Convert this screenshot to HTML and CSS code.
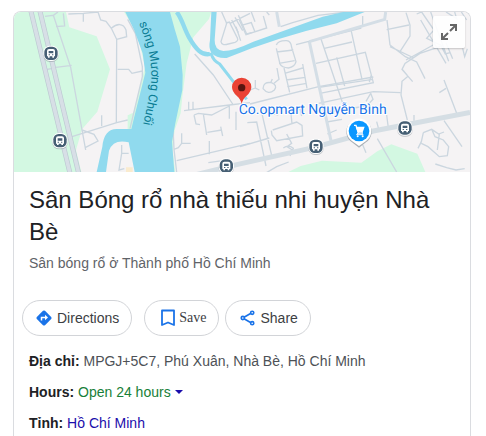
FILE: index.html
```html
<!DOCTYPE html>
<html lang="vi">
<head>
<meta charset="utf-8">
<meta name="viewport" content="width=device-width, initial-scale=1">
<title>Sân Bóng rổ nhà thiếu nhi huyện Nhà Bè</title>
<link rel="stylesheet" href="styles.css">
</head>
<body>
<main class="card">
  <div class="map">
    <svg class="map-art" viewBox="42 36 1368 480" preserveAspectRatio="xMidYMid slice" role="img" aria-label="Map">
      <defs>
        <path id="river-label" d="M417 69C436 118 451 160 454 212C456 268 440 318 424 400"/>
        <g id="bus">
          <rect x="-23" y="-20" width="46" height="46" rx="20" fill="#8b949c" opacity=".5"/>
          <rect x="-23" y="-23" width="46" height="46" rx="20" fill="#fff"/>
          <rect x="-20" y="-20" width="40" height="40" rx="16" fill="#465f74"/>
          <path d="M-12 -7q0 -6 6 -6h12q6 0 6 6v16h-3v4h-5v-4h-8v4h-5v-4h-3z" fill="#fff"/>
          <path d="M-7 -7h14v7h-14zM-7 3h4v3h-4zM3 3h4v3h-4z" fill="#465f74"/>
        </g>
      </defs>
      <rect x="42" y="36" width="1368" height="480" fill="#f5f3f4"/>
      <g fill="#d3f8e2">
        <path d="M42 36H198L208 82L290 109L330 208L292 335L246 388L228 450L244 516H42Z"/>
        <path d="M508 36H634L627 57L580 112L560 190L547 290L542 340L524 390L518 450L526 516H500Z"/>
        <path d="M383 346L400 338L435 200L412 100L372 36H400L450 200L410 392H383Z"/>
        <path d="M865 516L902 498L966 482L1084 488L1132 454L1174 433L1252 461L1276 516Z"/>
      </g>
      <path d="M378 502h20v14h-20z" fill="#faebce"/>
      <g fill="none" stroke="#cbd6df" stroke-width="4">
        <path d="M135 49L160 46L212 202L257 450M160 46L174 36M168 80L194 78L190 40M135 210L168 202L215 196M216 410L350 368L383 360M246 390L282 403L294 423L257 442"/>
        <path d="M205 42L250 40L294 36M250 40V65M294 36L302 60L318 64L334 85L350 118L349 368M334 85C350 70 370 68 378 90L380 110L350 118M353 208H386L396 220L427 213M383 58L406 100L427 200V230L390 386M305 346V378M365 435V460H386M365 460L357 510L373 506"/>
        <path d="M584 162L640 225L698 312M552 332L688 315L750 308M566 305V330M579 305V330M582 345L595 340L635 345L688 318M688 315V356M582 345L588 372L600 374M610 342L620 405M622 397L665 390M662 380L668 408M519 380L522 448L535 443L545 430L572 430M545 430V400M522 448L530 516M530 482L750 430M628 423V463"/>
        <path d="M665 36L680 70L663 125Q665 138 685 132L705 127Q718 122 710 110L690 70L750 40M695 60L715 98M705 52L728 92M715 46L740 102L755 98M677 69L690 66"/>
        <path d="M708 80L722 122M718 60L738 104L800 84L790 48M724 76L754 68L765 96M754 36L765 65M808 45L800 36M842 80L878 68L954 46L1040 36M1088 48V76"/>
        <path d="M829 135Q834 121 860 122Q873 123 875 142L888 185Q885 200 865 204Q845 202 840 192L829 145M830 156L880 150M837 190L884 182M852 204L869 277M854 220L908 204M858 240L916 232M862 260L920 250M908 192L921 265M831 204L837 238L822 250"/>
        <path d="M789 266Q790 244 814 248Q834 255 823 270Q805 286 789 266M766 240V264L778 270M750 270L766 264M750 312L956 260L1120 231M812 248L817 237"/>
        <path d="M888 134L1084 84M963 117L1031 318M973 145L1056 126M948 190L1096 157L1120 248L960 280M957 262L1118 238M1054 94L1086 238M1010 172L1034 258M1114 225L1108 246"/>
        <path d="M956 310L1120 275L1202 278M1112 280L1119 298L1100 318L980 336M1112 280L1098 304"/>
        <path d="M1161 60L1170 135L1216 170L1250 186L1275 236M1160 89L1227 75M1218 38L1230 75V108L1198 158M1250 42L1265 36L1302 90L1280 115L1326 138L1260 160L1215 190L1206 208L1238 245M1262 60L1338 190M1292 36L1346 184M1305 132L1218 180M1225 228L1206 244L1203 285L1222 360M1207 208L1222 226M1170 140L1242 174M1320 132L1336 162L1350 158M1338 128L1358 176M1388 145L1394 170L1402 146M1338 36L1370 56L1364 36M1384 36L1400 60"/>
        <path d="M1332 240L1370 340M1318 278L1338 265M1242 345V362M1332 362L1386 440M1270 398L1264 425L1254 445M1270 398L1295 388L1316 402L1332 396M1295 388L1305 410L1330 420L1346 440L1342 467L1318 470L1284 440L1264 430M1318 402L1312 450M1306 492L1340 503L1368 510L1394 506"/>
        <path d="M742 368L770 366L798 498M784 333L817 475M708 390V335M720 440L808 414M818 390L890 366L906 376L908 408L830 422L816 405L814 392M876 372L872 330M860 402L875 430L861 440L877 450M815 340L835 345M982 402L1010 390M980 366L1026 358M1130 365L1138 395M1160 345L1165 384M1132 416L1190 516M1088 434L1098 458M796 520L830 500L866 486M625 488L668 482M900 325L905 348M850 444Q865 432 880 445L870 468"/>
      </g>
      <g fill="none" stroke="#bdc9d2">
        <path d="M93 34L210 520M120 34L236 520" stroke-width="15"/>
        <path d="M93 34L210 520M120 34L236 520" stroke="#d7dfe6" stroke-width="11"/>
        <path d="M588 524L710 494L940 443L1120 393L1410 337" stroke="#d5dee4" stroke-width="15"/>
        <path d="M928 125L993 422M928 125L1154 58L1157 36M830 36L838 80" stroke="#d4dee6" stroke-width="9"/>
      </g>
      <g fill="#90daee">
        <path d="M376 36H510L524 87L540 140L548 225L547 270L526 370L516 425L523 516H404L386 427Q340 416 327 452L318 516H290L307 440Q312 386 352 387H394L402 354L436 218L428 160L402 89Z"/>
        <path d="M634 36H650L644 120Q643 150 670 153Q700 153 760 125L968 50L1030 36H1094L1010 70Q830 112 680 174Q650 176 634 158Q625 145 630 120Z"/>
      </g>
      <path d="M530 36C546 55 552 86 567 112C588 148 605 167 630 162" fill="none" stroke="#90daee" stroke-width="13"/>
      <path d="M632 158C640 180 645 184 659 192L700 245L740 298" fill="none" stroke="#90daee" stroke-width="9"/>
      <text class="river-text"><textPath href="#river-label">sông Mương Chuối</textPath></text>
      <use href="#bus" x="153" y="160"/>
      <use href="#bus" x="180" y="422"/>
      <use href="#bus" x="679" y="498"/>
      <use href="#bus" x="948" y="439"/>
      <use href="#bus" x="1215" y="384"/>
      <text class="place-text" x="716" y="341">Co.opmart Nguyễn Bình</text>
      <path d="M725 312Q722 297 710 287Q696 275 696 261A29 28 0 0 1 754 261Q754 275 740 287Q728 297 725 312Z" fill="#ea4335"/>
      <circle cx="725" cy="263" r="11" fill="#591510"/>
      <path d="M1077 443L1056 427A38 38 0 1 1 1098 427Z" fill="#8b949c" opacity=".7"/>
      <path d="M1077 438L1056 423A37 37 0 1 1 1098 423Z" fill="#fff"/>
      <circle cx="1077" cy="393" r="31" fill="#0a97ff"/>
      <path d="M1062 376H1068L1075 399H1089" fill="none" stroke="#fff" stroke-width="4"/>
      <path d="M1067 380H1094L1088 397H1073Z" fill="#fff"/>
      <path d="M1074 398L1070 404H1090" fill="none" stroke="#fff" stroke-width="3"/>
      <circle cx="1073" cy="409" r="3" fill="#fff"/><circle cx="1088" cy="409" r="3" fill="#fff"/>
    </svg>
    <button class="expand" type="button" aria-label="Expand map">
      <svg width="18" height="18" viewBox="0 0 18 18" fill="none" stroke="#666" stroke-width="2"><path d="M10 2h6v6M16 2l-6 6M2 10v6h6M2 16l6-6"/></svg>
    </button>
  </div>
  <header class="heading">
    <h1>Sân Bóng rổ nhà thiếu nhi huyện Nhà Bè</h1>
    <p>Sân bóng rổ ở Thành phố Hồ Chí Minh</p>
  </header>
  <div class="actions">
    <button class="pill" type="button">
      <svg width="16" height="16" viewBox="0 0 16 16"><path d="M7 .8Q8 0 9 .8L15.200 7Q16 8 15.200 9L9 15.200Q8 16 7 15.200L.8 9Q0 8 .8 7Z" fill="#1a73e8"/><path d="M5.500 10.500V7.500H10" fill="none" stroke="#fff" stroke-width="1.500"/><path d="M9 4.800L12 7.500L9 10.200Z" fill="#fff"/></svg>
      Directions
    </button>
    <button class="pill pill-save" type="button">
      <svg width="14" height="18" viewBox="0 0 14 18"><path d="M1 1.500H13V16L7 13.500L1 16Z" fill="none" stroke="#1a73e8" stroke-width="1.800" stroke-linejoin="round"/></svg>
      Save
    </button>
    <button class="pill pill-share" type="button">
      <svg width="16" height="16" viewBox="0 0 16 16" fill="none" stroke="#1a73e8" stroke-width="1.600"><path d="M4 7.200L11 3.200M4 8.800L11 12.800"/><circle cx="2.800" cy="8" r="1.600"/><circle cx="12.200" cy="2.800" r="1.600"/><circle cx="12.200" cy="13.200" r="1.600"/></svg>
      Share
    </button>
  </div>
  <div class="facts">
    <p><b>Địa chỉ:</b> MPGJ+5C7, Phú Xuân, Nhà Bè, Hồ Chí Minh</p>
    <p><b>Hours:</b> <button class="hours" type="button">Open 24 hours</button></p>
    <p><b>Tỉnh:</b> <a href="#">Hồ Chí Minh</a></p>
  </div>
</main>
</body>
</html>
```
FILE: styles.css
```css
* {
  box-sizing: border-box;
}

body {
  margin: 0;
  background: #fff;
  color: #202124;
  font: 14px/20px "Liberation Sans", Arial, sans-serif;
}

h1,
p {
  margin: 0;
}

button {
  font: inherit;
  cursor: pointer;
}

.card {
  min-height: calc(100vh - 11px);
  margin: 11px 15px 0 13px;
  border: 1px solid #dadce0;
  border-bottom: 0;
  border-radius: 8px 8px 0 0;
  overflow: hidden;
}

.map {
  position: relative;
  height: 160px;
}

.map-art {
  display: block;
  width: 100%;
  height: 100%;
}

.river-text {
  fill: #0b7d94;
  font: 37px Roboto, sans-serif;
  text-rendering: geometricPrecision;
}

.place-text {
  fill: #1a73e8;
  stroke: #fff;
  stroke-width: 6px;
  paint-order: stroke;
  font: 42px Roboto, sans-serif;
  text-rendering: geometricPrecision;
}

.expand {
  position: absolute;
  top: 4px;
  right: 5px;
  display: grid;
  place-items: center;
  width: 32px;
  height: 32px;
  padding: 0;
  border: 0;
  border-radius: 2px;
  background: rgba(255, 255, 255, 0.9);
  box-shadow: 0 1px 2px rgba(0, 0, 0, 0.2);
}

.heading {
  padding: 12px 15px 0;
}

.heading h1 {
  font-size: 24px;
  font-weight: 400;
  line-height: 32px;
}

.heading p {
  margin-top: 5px;
  color: #5f6368;
}

.actions {
  display: flex;
  padding: 27px 8px 0;
}

.pill {
  display: flex;
  align-items: center;
  gap: 5px;
  height: 36px;
  padding: 0 12px 0 13px;
  border: 1px solid #d2d4d8;
  border-radius: 18px;
  background: #fff;
  color: #3c4043;
}

.pill-save {
  gap: 4px;
  margin: 0 6px 0 12px;
  padding-left: 16px;
  font-family: "Liberation Serif", "Times New Roman", serif;
}

.pill-share {
  gap: 4px;
  padding-left: 14px;
}

.facts {
  display: grid;
  gap: 11px;
  padding: 15px;
  color: #4d5156;
}

.facts b {
  color: #202124;
}

.facts a {
  color: #1a0dab;
  text-decoration: none;
}

.hours {
  padding: 0;
  border: 0;
  background: none;
  color: #188038;
}

.hours::after {
  content: "";
  display: inline-block;
  margin-left: 4px;
  border: 4px solid transparent;
  border-top-color: #1a0dab;
  border-bottom: 0;
  vertical-align: 3px;
}
```
